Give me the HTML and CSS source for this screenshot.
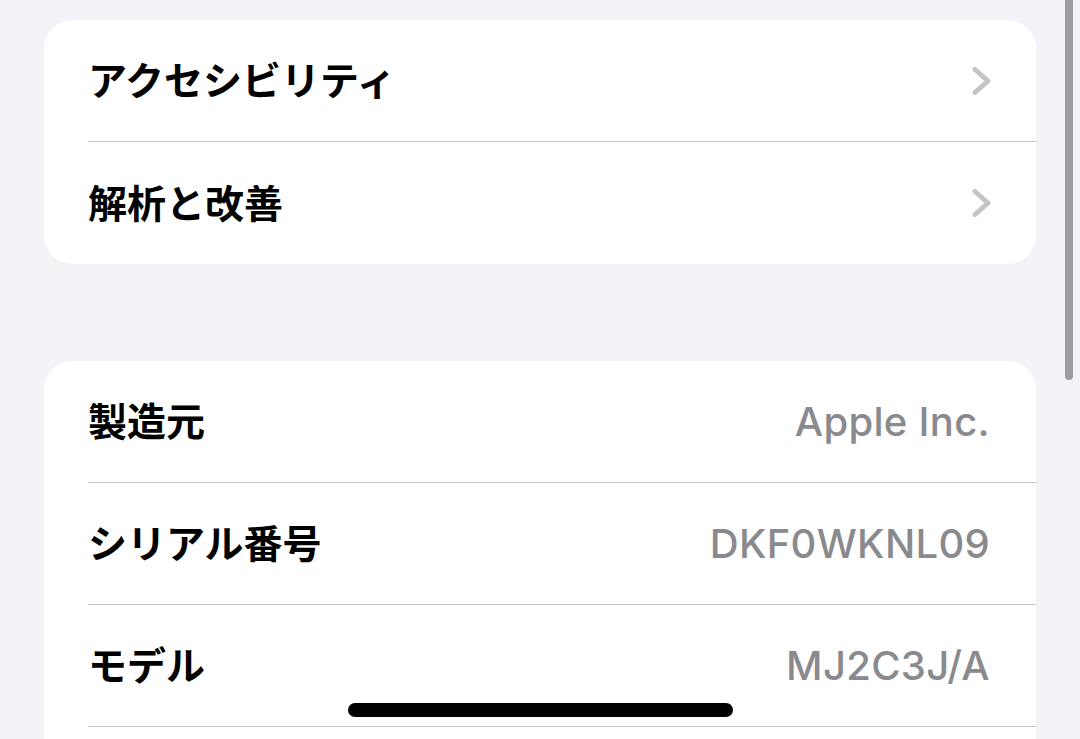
FILE: index.html
```html
<!DOCTYPE html>
<html lang="ja">
<head>
<meta charset="utf-8">
<link rel="stylesheet" href="styles.css">
</head>
<body>
<div class="page">
  <section class="card">
    <div class="row">
      <div class="row-inner">
        <span class="label">アクセシビリティ</span>
        <svg class="chev" width="20" height="30" viewBox="0 0 20 30"><path d="M3 3.5 L16 15 L3 26.5" fill="none" stroke="#c4c4c7" stroke-width="5" stroke-linecap="round" stroke-linejoin="round"/></svg>
      </div>
    </div>
    <div class="row">
      <div class="row-inner last">
        <span class="label">解析と改善</span>
        <svg class="chev" width="20" height="30" viewBox="0 0 20 30"><path d="M3 3.5 L16 15 L3 26.5" fill="none" stroke="#c4c4c7" stroke-width="5" stroke-linecap="round" stroke-linejoin="round"/></svg>
      </div>
    </div>
  </section>

  <section class="card card-open">
    <div class="row">
      <div class="row-inner">
        <span class="label">製造元</span>
        <span class="value">Apple Inc.</span>
      </div>
    </div>
    <div class="row">
      <div class="row-inner">
        <span class="label">シリアル番号</span>
        <span class="value">DKF0WKNL09</span>
      </div>
    </div>
    <div class="row">
      <div class="row-inner">
        <span class="label">モデル</span>
        <span class="value">MJ2C3J/A</span>
      </div>
    </div>
    <div class="row">
      <div class="row-inner last"></div>
    </div>
  </section>
</div>
<div class="scrollbar"></div>
<div class="home-indicator"></div>
</body>
</html>
```

FILE: styles.css
```css
html, body {
  margin: 0;
  padding: 0;
  height: 100%;
  overflow: hidden;
  background: #f2f2f7;
}

body {
  font-family: "Noto Sans CJK JP", "Inter", sans-serif;
  color: #000;
}

.page {
  padding: 20px 44px 0 44px;
  display: flex;
  flex-direction: column;
  gap: 97px;
}

.card {
  background: #fff;
  border-radius: 28px;
  overflow: hidden;
}

.card-open {
  border-radius: 28px 28px 0 0;
}

.row {
  padding-left: 44px;
}

.row-inner {
  height: 121px;
  border-bottom: 1px solid #c8c8cc;
  display: flex;
  align-items: center;
  justify-content: space-between;
  padding-right: 46px;
}

.row-inner.last {
  border-bottom: none;
  height: 122px;
}

.label {
  font-size: 39px;
  font-weight: 700;
  line-height: 1;
  position: relative;
  top: -2px;
}

.value {
  font-family: "Inter", "Noto Sans CJK JP", sans-serif;
  font-size: 40px;
  font-weight: 500;
  letter-spacing: 0.3px;
  color: #8a8a8e;
  line-height: 1;
}

.chev {
  display: block;
  margin-right: -2px;
}

.scrollbar {
  position: absolute;
  left: 1065px;
  top: 0;
  width: 8px;
  height: 380px;
  background: #9c9ba1;
  border-radius: 0 0 4px 4px;
}

.home-indicator {
  position: absolute;
  left: 348px;
  top: 703px;
  width: 385px;
  height: 14px;
  background: #000;
  border-radius: 7px;
}
```
